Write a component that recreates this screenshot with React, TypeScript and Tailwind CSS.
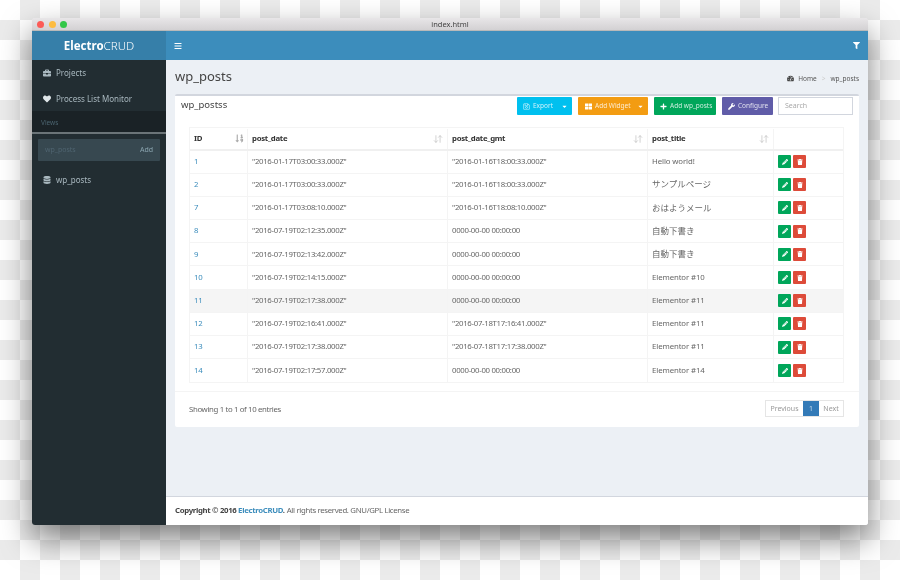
import React from 'react';
import { ArrowDownUp } from 'lucide-react';
import {
    FaBars, FaBriefcase, FaCaretDown, FaDatabase, FaFilter, FaHeart, FaPencilAlt, FaPlus,
    FaRegSave, FaSortNumericDown, FaTachometerAlt, FaThLarge, FaTrash, FaWrench,
} from 'react-icons/fa';

const rows = [
    { id: 1, date: '"2016-01-17T03:00:33.000Z"', gmt: '"2016-01-16T18:00:33.000Z"', title: 'Hello world!' },
    { id: 2, date: '"2016-01-17T03:00:33.000Z"', gmt: '"2016-01-16T18:00:33.000Z"', title: 'サンプルページ' },
    { id: 7, date: '"2016-01-17T03:08:10.000Z"', gmt: '"2016-01-16T18:08:10.000Z"', title: 'おはようメール' },
    { id: 8, date: '"2016-07-19T02:12:35.000Z"', gmt: '0000-00-00 00:00:00', title: '自動下書き' },
    { id: 9, date: '"2016-07-19T02:13:42.000Z"', gmt: '0000-00-00 00:00:00', title: '自動下書き' },
    { id: 10, date: '"2016-07-19T02:14:15.000Z"', gmt: '0000-00-00 00:00:00', title: 'Elementor #10' },
    { id: 11, date: '"2016-07-19T02:17:38.000Z"', gmt: '0000-00-00 00:00:00', title: 'Elementor #11' },
    { id: 12, date: '"2016-07-19T02:16:41.000Z"', gmt: '"2016-07-18T17:16:41.000Z"', title: 'Elementor #11' },
    { id: 13, date: '"2016-07-19T02:17:38.000Z"', gmt: '"2016-07-18T17:17:38.000Z"', title: 'Elementor #11' },
    { id: 14, date: '"2016-07-19T02:17:57.000Z"', gmt: '0000-00-00 00:00:00', title: 'Elementor #14' },
];

const columns = 'grid grid-cols-[58px_200px_200px_126px_69px]';
const cell = 'flex items-center px-[4px] border-r border-[#f4f4f4] last:border-r-0';

const SortIcon = () => <ArrowDownUp className="ml-auto h-[10px] w-[10px] text-[#c9c9c9]" strokeWidth={2} />;

const Sidebar = () => (
    <aside className="flex w-[134px] shrink-0 flex-col bg-[#222d32] text-[8px] text-[#a9b8bf]">
        <div className="flex h-[29px] items-center justify-center bg-[#367fa9] text-[11.5px] text-white">
            <b className="font-bold">Electro</b>
            <span className="font-light">CRUD</span>
        </div>
        <div className="flex h-[26px] items-center gap-[5px] pl-[11px]">
            <FaBriefcase className="h-[8px] w-[8px]" />
            Projects
        </div>
        <div className="flex h-[25px] items-center gap-[5px] pl-[11px]">
            <FaHeart className="h-[8px] w-[8px] text-[#dfe6e9]" />
            Process List Monitor
        </div>
        <div className="flex h-[23px] items-center border-b-2 border-[#6b7478] bg-[#1a2226] pl-[9px] pt-[2px] text-[6.5px] text-[#4b646f]">
            Views
        </div>
        <div className="mx-[6px] mt-[5px] flex h-[22px] items-center justify-between rounded-[1px] bg-[#374850] pl-[7px] pr-[7px] pt-[1px] text-[7px]">
            <span className="text-[#4f6470]">wp_posts</span>
            <span className="text-[#8aa4af]">Add</span>
        </div>
        <div className="mt-[6px] flex h-[25px] items-center gap-[5px] pl-[11px]">
            <FaDatabase className="h-[8px] w-[8px]" />
            wp_posts
        </div>
    </aside>
);

const Toolbar = () => (
    <div className="flex h-[18px] items-stretch text-[6.5px] text-white/80">
        <div className="flex w-[55px] items-center gap-[3px] rounded-[1px] bg-[#00c0ef] pl-[6px]">
            <FaRegSave className="h-[7px] w-[7px]" />
            Export
            <FaCaretDown className="ml-auto mr-[4px] h-[7px] w-[7px] text-white" />
        </div>
        <div className="ml-[6px] flex w-[70px] items-center gap-[3px] rounded-[1px] bg-[#f39c12] pl-[7px]">
            <FaThLarge className="h-[7px] w-[7px] text-white" />
            Add Widget
            <FaCaretDown className="ml-auto mr-[4px] h-[7px] w-[7px] text-white" />
        </div>
        <div className="ml-[6px] flex w-[62px] items-center gap-[3px] rounded-[1px] bg-[#00a65a] pl-[6px]">
            <FaPlus className="h-[7px] w-[7px] text-white" />
            Add wp_posts
        </div>
        <div className="ml-[6px] flex w-[51px] items-center gap-[3px] rounded-[1px] bg-[#605ca8] pl-[6px]">
            <FaWrench className="h-[7px] w-[7px] text-white" />
            Configure
        </div>
        <div className="ml-[5px] flex w-[75px] items-center border border-[#d2d6de] bg-white pl-[6px] text-[7px] text-[#a9a9a9]">
            Search
        </div>
    </div>
);

const PostsTable = () => (
    <div className="ml-[14px] mr-[15px] mt-[12px] border border-[#f4f4f4] text-[7.8px] tracking-[-0.3px] text-[#666]">
        <div className={`${columns} h-[22.5px] border-b-2 border-[#f0f0f0] pt-[1px] font-bold text-[#333]`}>
            <div className={cell}>ID<FaSortNumericDown className="-mr-[1px] ml-auto h-[9px] w-[9px] text-[#aaa]" /></div>
            <div className={cell}>post_date<SortIcon /></div>
            <div className={cell}>post_date_gmt<SortIcon /></div>
            <div className={cell}>post_title<SortIcon /></div>
            <div className={cell} />
        </div>
        {rows.map((row) => (
            <div
                key={row.id}
                className={`${columns} h-[23.2px] border-b border-[#f4f4f4] last:border-b-0 ${row.id === 11 ? 'bg-[#f5f5f5]' : ''}`}
            >
                <div className={`${cell} text-[#3c8dbc]`}>{row.id}</div>
                <div className={cell}>{row.date}</div>
                <div className={cell}>{row.gmt}</div>
                <div className={`${cell} ${row.id > 1 && row.id < 10 ? 'text-[8.5px] tracking-normal' : 'tracking-[-0.1px]'}`}>{row.title}</div>
                <div className={`${cell} gap-[2px]`}>
                    <span className="flex h-[13px] w-[13px] items-center justify-center rounded-[1px] bg-[#00a65a] text-white">
                        <FaPencilAlt className="h-[6px] w-[6px]" />
                    </span>
                    <span className="flex h-[13px] w-[13px] items-center justify-center rounded-[1px] bg-[#dd4b39] text-white">
                        <FaTrash className="h-[6px] w-[6px]" />
                    </span>
                </div>
            </div>
        ))}
    </div>
);

const App: React.FC = () => (
    <div
        className="h-[580px] w-[900px] overflow-hidden bg-white bg-[conic-gradient(#ebebeb_25%,#ffffff_0_50%,#ebebeb_0_75%,#ffffff_0)] bg-[length:40px_40px] pl-[32px] pt-[18px] blur-[0.5px]"
        style={{ fontFamily: '"Noto Sans", "Noto Sans CJK JP", sans-serif' }}
    >
        <div className="flex h-[507px] w-[836px] flex-col overflow-hidden rounded-[3px] shadow-[0_14px_30px_rgba(0,0,0,0.5)]">
            <div className="relative flex h-[13px] shrink-0 items-center justify-center border-b border-[#b9b9b9] bg-gradient-to-b from-[#e8e6e8] to-[#d3d1d3] pt-[2px] text-[7.5px] text-[#444]">
                <span className="absolute left-[5px] top-[3px] flex gap-[4.5px]">
                    <i className="h-[7px] w-[7px] rounded-full bg-[#fc5b57]" />
                    <i className="h-[7px] w-[7px] rounded-full bg-[#fdbc40]" />
                    <i className="h-[7px] w-[7px] rounded-full bg-[#33c748]" />
                </span>
                index.html
            </div>
            <div className="flex min-h-0 flex-1">
                <Sidebar />
                <div className="flex min-w-0 flex-1 flex-col bg-[#ecf0f5]">
                    <header className="flex h-[29px] shrink-0 items-center justify-between bg-[#3c8dbc] px-[8px] text-white">
                        <FaBars className="h-[8px] w-[8px]" />
                        <FaFilter className="h-[7px] w-[7px]" />
                    </header>
                    <div className="flex h-[34px] shrink-0 items-center justify-between pl-[9px] pr-[9px]">
                        <h1 className="text-[13px] text-[#444]">wp_posts</h1>
                        <div className="mt-[3px] flex items-center text-[6.5px] text-[#555]">
                            <FaTachometerAlt className="mr-[4px] h-[7px] w-[7px] text-[#444]" />
                            Home
                            <span className="mx-[5px] text-[#ccc]">&gt;</span>
                            wp_posts
                        </div>
                    </div>
                    <section className="mx-[9px] h-[333px] shrink-0 rounded-[2px] border-t-2 border-[#d2d6de] bg-white">
                        <div className="flex items-start justify-between pl-[6px] pr-[6px] pt-[1px]">
                            <h2 className="mt-[1px] text-[9.5px] text-[#444]">wp_postss</h2>
                            <Toolbar />
                        </div>
                        <PostsTable />
                        <div className="mt-[8px] flex h-[36px] items-center justify-between border-t border-[#f4f4f4] pl-[14px] pr-[15px] text-[7.8px] tracking-[-0.35px] text-[#666]">
                            Showing 1 to 1 of 10 entries
                            <div className="mb-[2px] flex h-[17px] items-stretch border border-[#e5e5e5] text-[7px] tracking-normal text-[#999]">
                                <span className="flex w-[37px] items-center justify-center">Previous</span>
                                <span className="flex w-[16px] items-center justify-center bg-[#337ab7] text-[#c9dcec]">1</span>
                                <span className="flex w-[24px] items-center justify-center">Next</span>
                            </div>
                        </div>
                    </section>
                    <footer className="mt-auto flex h-[29px] shrink-0 items-center border-t border-[#d2d6de] bg-white pl-[9px] text-[7.8px] tracking-[-0.33px] text-[#666]">
                        <b className="font-bold text-[#444]">Copyright © 2016 <span className="text-[#3c8dbc]">ElectroCRUD</span>.</b>
                        <span className="ml-[2px]">All rights reserved. GNU/GPL License</span>
                    </footer>
                </div>
            </div>
        </div>
    </div>
);

export default App;
